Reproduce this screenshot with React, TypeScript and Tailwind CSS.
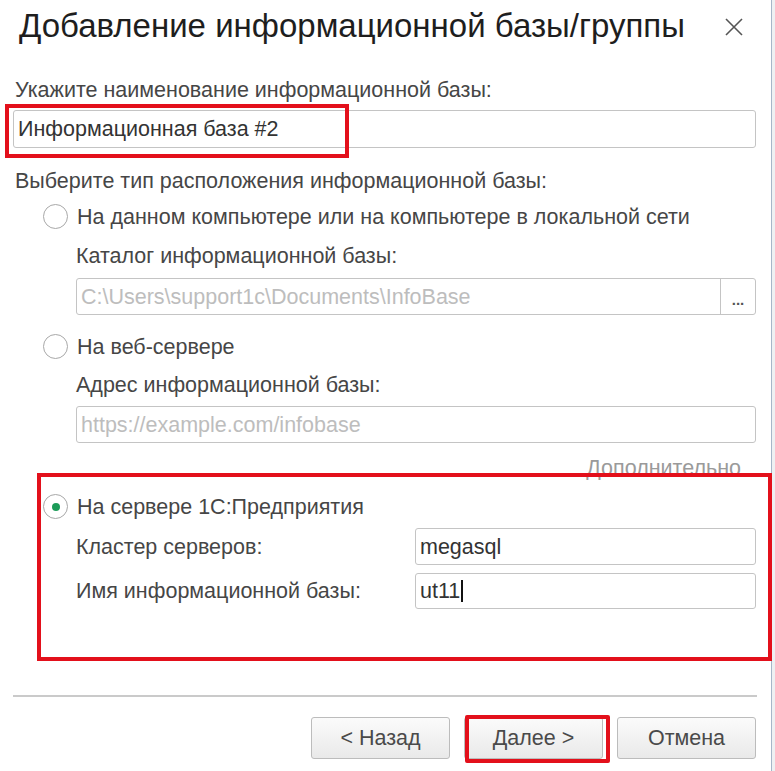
import React from "react";

const font = { fontFamily: '"Liberation Sans", Arial, sans-serif' };

function Radio({ checked }: { checked?: boolean }) {
  return (
    <span className="flex h-[25px] w-[25px] shrink-0 items-center justify-center rounded-full border-[1.5px] border-[#a8a8a8] bg-white">
      {checked && <span className="h-[8px] w-[8px] rounded-full bg-[#1c9b58]" />}
    </span>
  );
}

function Field({
  children,
  className = "",
}: {
  children?: React.ReactNode;
  className?: string;
}) {
  return (
    <div
      className={
        "flex items-center rounded-[3px] border border-[#c4c4c4] bg-white pl-[4px] text-[21.5px] leading-[24px] " +
        className
      }
    >
      {children}
    </div>
  );
}

function Button({ children }: { children: React.ReactNode }) {
  return (
    <div className="flex h-[42px] w-[139px] items-center justify-center rounded-[3px] border border-[#bcbcbc] bg-gradient-to-b from-[#fbfbfb] to-[#e9e9e9] text-[21.5px] leading-[24px] text-[#4a4a4a]">
      {children}
    </div>
  );
}

export default function App() {
  return (
    <div className="flex h-[771px] w-[775px] bg-[#eef0f2]" style={font}>
      <div className="relative flex h-[771px] w-[772px] flex-col border-r border-[#a6b6c8] bg-white text-[#464646]">
        {/* Header */}
        <div className="flex h-[78px] items-start justify-between pl-[19px] pr-[28px] pt-[6px]">
          <div className="text-[33px] leading-[40px] text-[#1e1e1e]">
            Добавление информационной базы/группы
          </div>
          <svg width="18" height="18" viewBox="0 0 18 18" className="mt-[12px]">
            <path d="M1 1 L17 17 M17 1 L1 17" stroke="#555" strokeWidth="1.6" />
          </svg>
        </div>

        {/* Content */}
        <div className="flex flex-col pl-[13px] pr-[15px] text-[21.5px] leading-[24px]">
          <div className="pl-[2px]">Укажите наименование информационной базы:</div>
          <Field className="mt-[8px] h-[38px] text-[#333]">Информационная база #2</Field>

          <div className="mt-[21px] pl-[2px]">Выберите тип расположения информационной базы:</div>

          {/* Option 1 */}
          <div className="mt-[11px] flex items-center gap-[9px] pl-[30px]">
            <Radio />
            <span>На данном компьютере или на компьютере в локальной сети</span>
          </div>
          <div className="mt-[15px] pl-[63px]">Каталог информационной базы:</div>
          <div className="ml-[63px] mt-[10px] flex h-[37px] rounded-[3px] border border-[#c4c4c4] bg-white">
            <div className="flex flex-1 items-center pl-[4px] text-[#bdbdbd]">
              C:\Users\support1c\Documents\InfoBase
            </div>
            <div className="flex w-[35px] items-end justify-center border-l border-[#c4c4c4] pb-[7px] text-[15px] font-bold leading-[14px] text-[#555]">
              ...
            </div>
          </div>

          {/* Option 2 */}
          <div className="mt-[19px] flex items-center gap-[9px] pl-[30px]">
            <Radio />
            <span>На веб-сервере</span>
          </div>
          <div className="mt-[14px] pl-[63px]">Адрес информационной базы:</div>
          <Field className="ml-[63px] mt-[9px] h-[37px] text-[#bdbdbd]">
            https://example.com/infobase
          </Field>
          <div className="mt-[13px] flex justify-end pr-[15px] text-[#9a9a9a]">Дополнительно</div>

          {/* Option 3 */}
          <div className="mt-[14px] flex items-center gap-[9px] pl-[30px]">
            <Radio checked />
            <span>На сервере 1С:Предприятия</span>
          </div>
          <div className="mt-[9px] flex items-center pl-[63px]">
            <div className="w-[339px]">Кластер серверов:</div>
            <Field className="h-[37px] flex-1 text-[#333]">megasql</Field>
          </div>
          <div className="mt-[8px] flex items-center pl-[63px]">
            <div className="w-[339px]">Имя информационной базы:</div>
            <Field className="h-[36px] flex-1 text-[#333]">
              ut11
              <span className="ml-[1px] h-[22px] w-[2px] bg-[#111]" />
            </Field>
          </div>

          {/* Separator */}
          <div className="mr-[-1px] mt-[86px] h-[2px] bg-[#cacaca]" />

          {/* Buttons */}
          <div className="mt-[20px] flex justify-end gap-[14px]">
            <Button>&lt; Назад</Button>
            <Button>Далее &gt;</Button>
            <Button>Отмена</Button>
          </div>
        </div>

        {/* Red annotation frames */}
        <div className="pointer-events-none absolute left-[5px] top-[104px] h-[54px] w-[344px] border-[4px] border-[#e3101b]" />
        <div className="pointer-events-none absolute left-[37px] top-[473px] h-[188px] w-[735px] border-[4px] border-[#e3101b]" />
        <div className="pointer-events-none absolute left-[465px] top-[715px] h-[48px] w-[145px] rounded-[2px] border-[4px] border-[#e3101b]" />
      </div>
    </div>
  );
}
